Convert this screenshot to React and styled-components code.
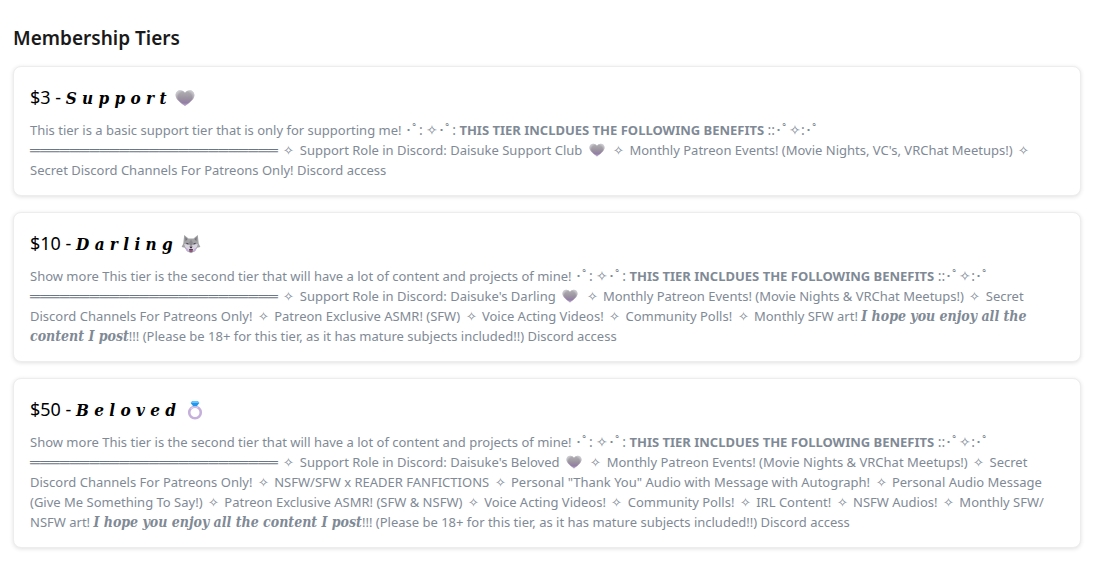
import React from "react";
import styled, { createGlobalStyle } from "styled-components";

const GlobalStyle = createGlobalStyle`
  * {
    box-sizing: border-box;
  }
  body {
    margin: 0;
    background: #fff;
    color: #000;
    font-family: "Noto Sans", "Open Sans", sans-serif;
  }
`;

const Page = styled.main`
  padding: 24px 29px 16px 13px;
`;

const PageTitle = styled.h2`
  margin: 0 0 14px;
  color: #1a1a1a;
  font-size: 19px;
  font-weight: 600;
  line-height: 28px;
`;

const TierList = styled.div`
  display: flex;
  flex-direction: column;
  gap: 16px;
`;

const TierCard = styled.article`
  padding: 16px 24px 15px 16px;
  border: 1px solid #ededed;
  border-radius: 8px;
  background: #fff;
  box-shadow: 0 1px 4px rgba(0, 0, 0, 0.12);
`;

const TierTitle = styled.h3`
  margin: 0 0 9px;
  font-size: 18px;
  font-weight: 400;
  line-height: 28px;
`;

const TierText = styled.p`
  margin: 0;
  color: #7f8a96;
  font-size: 13px;
  line-height: 20px;
`;

const Script = styled.em`
  font-family: "DejaVu Serif Condensed", "DejaVu Serif", serif;
  font-size: ${(p) => (p.$large ? 17 : 14)}px;
  font-style: italic;
  font-weight: 700;
  line-height: 1;
`;

const Symbols = styled.span`
  font-size: 14px;
  line-height: 1;
`;

const Rule = styled.span`
  color: #6b7785;
  font-size: 14px;
  font-weight: 700;
  line-height: 1;
`;

const StarMark = styled.span`
  margin: 0 2px;
`;

const Icon = styled.svg`
  width: ${(p) => p.$size}px;
  height: ${(p) => p.$size}px;
  margin: 0 ${(p) => (p.$size > 16 ? 4 : 3)}px;
  vertical-align: ${(p) => (p.$size > 16 ? -4 : -3)}px;
`;

function Heart({ size = 16 }) {
  return (
    <Icon $size={size} viewBox="0 0 20 20" role="img" aria-label="heart">
      <defs>
        <linearGradient id="heartFill" x1="0" y1="0" x2="0" y2="1">
          <stop offset="0" stopColor="#b3b2b5" />
          <stop offset="0.5" stopColor="#9b94a0" />
          <stop offset="1" stopColor="#8d6fa8" />
        </linearGradient>
        <radialGradient id="heartEdge" cx="0.5" cy="0.45" r="0.6">
          <stop offset="0.6" stopColor="#fff" stopOpacity="0" />
          <stop offset="1" stopColor="#e4dfea" stopOpacity="0.7" />
        </radialGradient>
      </defs>
      {["url(#heartFill)", "url(#heartEdge)"].map((fill) => (
        <path
          key={fill}
          fill={fill}
          d="M10 18C6.600 15.400.6 11.600.6 7.200.6 4.200 2.800 2.200 5.400 2.200c2 0 3.700 1 4.600 2.600.9-1.600 2.600-2.600 4.600-2.600 2.600 0 4.800 2 4.800 5 0 4.400-6 8.200-9.400 10.800z"
        />
      ))}
    </Icon>
  );
}

function Wolf() {
  return (
    <Icon $size={20} viewBox="0 0 20 20" role="img" aria-label="wolf">
      <path fill="#a3a3a6" d="M3.200 1 7.500 4.400h5L16.800 1l.9 8.400L19.400 13l-3.200.8-2.400 3.400-3.800 2-3.800-2-2.400-3.400L.6 13l1.700-3.600z" />
      <path fill="#77757b" d="m4.200 3 2.300 2.200-1.900 2zM15.800 3l-2.300 2.200 1.900 2z" />
      <path fill="#8b898e" d="m10 5.200 2 3.800-2 3-2-3z" />
      <path fill="#d9d5de" d="m3.200 10 4.600.5L10 12.500l2.200-2 4.600-.5-.8 2.800-3 3.600-3 1.200-3-1.200-3-3.600z" />
      <path fill="#c4addb" d="m4 13.500 3 1.500 1 3.200-2.500-1.400zM16 13.500 13 15l-1 3.200 2.500-1.400z" />
      <path fill="#3c3442" d="m5.300 8.700 2.500 1-.4.9-1.800-.5zM14.700 8.700l-2.500 1 .4.9 1.800-.5zM8.500 12.500h3l-.7 1.700H9.200z" />
      <path fill="#5a3855" d="M8 15h4l-.8 3H8.800z" />
      <path fill="#b96b91" d="M9.200 16.300h1.600l-.3 1.700h-1z" />
    </Icon>
  );
}

function Ring() {
  return (
    <Icon $size={20} viewBox="0 0 20 20" role="img" aria-label="ring">
      <circle cx="10" cy="12.500" r="5.800" fill="none" stroke="#c5b0dc" strokeWidth="2.600" />
      <path d="M5.800 9A5.800 5.800 0 0 1 13 7.500" fill="none" stroke="#ded2ec" strokeWidth="1.200" />
      <path fill="#2196ec" d="M7.300 1h5.400l1.600 2-2.500 3.200H8.200L5.700 3z" />
      <path fill="#63c3ff" d="M7.300 1h5.400l1.600 2H5.700z" />
    </Icon>
  );
}

function Benefits() {
  return (
    <>
      <Symbols>･ﾟ: ✧･ﾟ:</Symbols> <strong>THIS TIER INCLDUES THE FOLLOWING BENEFITS</strong>{" "}
      <Symbols>::･ﾟ✧:･ﾟ</Symbols> <Rule>{"═".repeat(25)}</Rule>
    </>
  );
}

function Star() {
  return (
    <>
      {" "}
      <StarMark>✧</StarMark>{" "}
    </>
  );
}

function Closing() {
  return (
    <>
      <Script>I hope you enjoy all the content I post</Script>!!! (Please be 18+ for this tier, as it has
      mature subjects included!!) Discord access
    </>
  );
}

function Tier({ price, name, icon, children }) {
  return (
    <TierCard>
      <TierTitle>
        {price} - <Script $large>{name}</Script> {icon}
      </TierTitle>
      <TierText>{children}</TierText>
    </TierCard>
  );
}

export default function App() {
  return (
    <Page>
      <GlobalStyle />
      <PageTitle>Membership Tiers</PageTitle>
      <TierList>
        <Tier price="$3" name="S u p p o r t" icon={<Heart size={20} />}>
          This tier is a basic support tier that is only for supporting me! <Benefits />
          <Star />
          Support Role in Discord: Daisuke Support Club <Heart />
          <Star />
          Monthly Patreon Events! (Movie Nights, VC's, VRChat Meetups!)
          <Star />
          Secret Discord Channels For Patreons Only! Discord access
        </Tier>
        <Tier price="$10" name="D a r l i n g" icon={<Wolf />}>
          Show more This tier is the second tier that will have a lot of content and projects of mine!{" "}
          <Benefits />
          <Star />
          Support Role in Discord: Daisuke's Darling <Heart />
          <Star />
          Monthly Patreon Events! (Movie Nights &amp; VRChat Meetups!)
          <Star />
          Secret Discord Channels For Patreons Only!
          <Star />
          Patreon Exclusive ASMR! (SFW)
          <Star />
          Voice Acting Videos!
          <Star />
          Community Polls!
          <Star />
          Monthly SFW art! <Closing />
        </Tier>
        <Tier price="$50" name="B e l o v e d" icon={<Ring />}>
          Show more This tier is the second tier that will have a lot of content and projects of mine!{" "}
          <Benefits />
          <Star />
          Support Role in Discord: Daisuke's Beloved <Heart />
          <Star />
          Monthly Patreon Events! (Movie Nights &amp; VRChat Meetups!)
          <Star />
          Secret Discord Channels For Patreons Only!
          <Star />
          NSFW/SFW x READER FANFICTIONS
          <Star />
          Personal "Thank You" Audio with Message with Autograph!
          <Star />
          Personal Audio Message (Give Me Something To Say!)
          <Star />
          Patreon Exclusive ASMR! (SFW &amp; NSFW)
          <Star />
          Voice Acting Videos!
          <Star />
          Community Polls!
          <Star />
          IRL Content!
          <Star />
          NSFW Audios!
          <Star />
          Monthly SFW/
          <wbr />
          NSFW art! <Closing />
        </Tier>
      </TierList>
    </Page>
  );
}
